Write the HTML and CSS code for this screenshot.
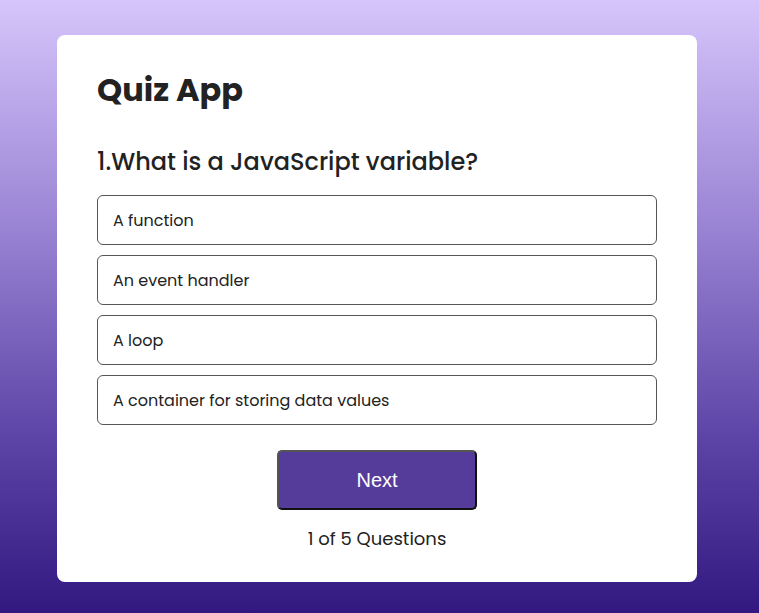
FILE: index.html
```html
<!DOCTYPE html>
<html lang="en">
<head>
<meta charset="utf-8">
<title>Quiz App</title>
<link rel="stylesheet" href="styles.css">
</head>
<body>
<main class="app">
  <h1 class="title">Quiz App</h1>
  <div class="quiz">
    <h2 class="question">1.What is a JavaScript variable?</h2>
    <div class="answers">
      <button class="answer">A function</button>
      <button class="answer">An event handler</button>
      <button class="answer">A loop</button>
      <button class="answer">A container for storing data values</button>
    </div>
    <button class="next">Next</button>
    <p class="count">1 of 5 Questions</p>
  </div>
</main>
</body>
</html>
```

FILE: styles.css
```css
* { box-sizing: border-box; }
html, body { height: 100%; }
body {
  margin: 0;
  font-family: "Poppins", "Open Sans", "DejaVu Sans", sans-serif;
  background: linear-gradient(to bottom, #d6c5fb 0%, #9d87d6 35%, #5e47a8 70%, #321880 100%);
  padding: 35px 5px 0 0;
}
.app {
  width: 640px;
  margin: 0 auto;
  background: #fff;
  border-radius: 8px;
  padding: 37px 40px 30px;
}
.title {
  margin: 0;
  font-size: 32px;
  font-weight: 700;
  color: #222;
  line-height: 36px;
}
.quiz { padding-top: 38px; }
.question {
  margin: 0;
  font-size: 24px;
  font-weight: 500;
  color: #222;
  line-height: 32px;
}
.answers {
  margin-top: 17px;
  display: flex;
  flex-direction: column;
  gap: 10px;
}
.answer {
  display: block;
  width: 100%;
  height: 50px;
  text-align: left;
  padding: 0 15px;
  font-family: inherit;
  font-size: 16px;
  color: #222;
  background: #fff;
  border: 1px solid #555;
  border-radius: 6px;
}
.next {
  display: block;
  margin: 25px auto 0;
  width: 200px;
  height: 60px;
  background: #553c9a;
  color: #fff;
  font-family: "Liberation Sans", Arial, sans-serif;
  font-size: 20px;
  border: 2px solid #111;
  border-top-color: #555;
  border-left-color: #555;
  border-radius: 5px;
}
.count {
  margin: 16px 0 0;
  text-align: center;
  font-size: 18px;
  color: #222;
  line-height: 26px;
}
```
